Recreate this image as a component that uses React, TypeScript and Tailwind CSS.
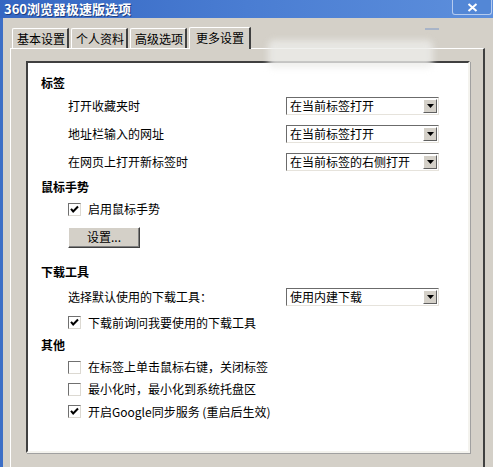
const font = "font-['SimSun','Noto_Sans_CJK_SC',sans-serif]";

function Check({ checked }: { checked: boolean }) {
  return (
    <span className="w-[13px] h-[13px] flex-shrink-0 bg-white border border-t-[#707070] border-l-[#707070] border-b-[#dcd9d2] border-r-[#dcd9d2] flex items-center justify-center">
      {checked && (
        <svg width="9" height="9" viewBox="0 0 9 9">
          <path d="M1 3.8 L3.2 6.5 L8 1.5" stroke="#000" strokeWidth="2" fill="none" />
        </svg>
      )}
    </span>
  );
}

function Select({ value }: { value: string }) {
  return (
    <div className="w-[153px] h-[18px] bg-white border border-t-[#6b6b6b] border-l-[#6b6b6b] border-b-[#e6e3dc] border-r-[#e6e3dc] flex items-center">
      <span className="flex-1 pl-[3px] text-[12px] leading-none text-black">{value}</span>
      <span className="w-[14px] h-[14px] mr-[1px] bg-[#d4d0c8] border border-t-white border-l-white border-b-[#606060] border-r-[#606060] flex items-center justify-center">
        <svg width="7" height="4" viewBox="0 0 7 4">
          <path d="M0 0 H7 L3.5 4 Z" fill="#000" />
        </svg>
      </span>
    </div>
  );
}

function Heading({ text, h, mt = 0 }: { text: string; h: number; mt?: number }) {
  return (
    <div className="flex items-center pl-[13px] font-bold text-[12px] leading-none text-black" style={{ height: h, marginTop: mt }}>
      {text}
    </div>
  );
}

function SelectRow({ label, value, h }: { label: string; value: string; h: number }) {
  return (
    <div className="flex items-center pl-[40px] text-[12px] leading-none text-black" style={{ height: h }}>
      <span className="w-[218px]">{label}</span>
      <Select value={value} />
    </div>
  );
}

function CheckRow({ label, checked, h }: { label: string; checked: boolean; h: number }) {
  return (
    <div className="flex items-center pl-[40px] gap-[7px] text-[12px] leading-none text-black" style={{ height: h }}>
      <Check checked={checked} />
      <span>{label}</span>
    </div>
  );
}

const tabs = ['基本设置', '个人资料', '高级选项'];

export default function App() {
  return (
    <div className={`relative w-[493px] h-[467px] overflow-hidden bg-[#d4d0c8] ${font}`}>
      {/* title bar */}
      <div className="h-[18px] bg-gradient-to-r from-[#3466c2] via-[#4a7dd2] to-[#5d8fdc] flex items-start justify-between">
        <span className="pl-[4px] pt-[2px] text-[13px] font-bold text-white leading-none [text-shadow:1px_1px_0_#1f3f80]">
          360浏览器极速版选项
        </span>
        <span className="w-[40px] h-[15px] mr-[1px] border border-[#b5cbef] border-t-0 rounded-b-[3px] bg-[#5387d6] flex items-center justify-center">
          <svg width="11" height="9" viewBox="0 0 11 9">
            <path d="M1.5 1 L9.5 8 M9.5 1 L1.5 8" stroke="#fff" strokeWidth="2" />
          </svg>
        </span>
      </div>

      <div className="flex h-[449px]">
        <div className="w-[3px] bg-[#3c6ec6]" />
        <div className="flex-1 pl-[7px] pt-[8px]">
          {/* tabs */}
          <div className="flex items-end h-[22px] pl-[2px] text-[12px] leading-none text-black">
            {tabs.map((t) => (
              <div
                key={t}
                className="h-[20px] pl-[4px] pr-[2px] mr-[2px] flex items-center border-l border-t border-l-white border-t-white border-r-[2px] border-r-[#404040] rounded-tl-[2px]"
              >
                {t}
              </div>
            ))}
            <div className="relative z-10 h-[22px] pl-[6px] pr-[5px] -mb-[1px] flex items-center pb-[1px] bg-[#d4d0c8] border-l border-t border-l-white border-t-white border-r-[2px] border-r-[#404040] rounded-tl-[2px]">
              更多设置
            </div>
          </div>

          {/* panel */}
          <div className="w-[475px] h-[430px] border-l border-t border-l-white border-t-white border-r-[2px] border-r-[#404040] pt-[12px] pl-[15px]">
            <div className="w-[444px] h-[392px] bg-white border-2 border-t-[#404040] border-l-[#404040] border-b-[#f4f3ee] border-r-[#f4f3ee] [box-shadow:1px_1px_0_#a0a0a0] pt-[10px]">
              <Heading text="标签" h={19} />
              <SelectRow label="打开收藏夹时" value="在当前标签打开" h={28} />
              <SelectRow label="地址栏输入的网址" value="在当前标签打开" h={28} />
              <SelectRow label="在网页上打开新标签时" value="在当前标签的右侧打开" h={28} />
              <Heading text="鼠标手势" h={22} />
              <CheckRow label="启用鼠标手势" checked h={22} />
              <div className="pl-[40px] mt-[3px]">
                <button className="w-[72px] h-[21px] bg-[#d4d0c8] border border-t-white border-l-white border-b-[#404040] border-r-[#404040] text-[12px] leading-none text-black [box-shadow:inset_-1px_-1px_0_#808080]">
                  设置...
                </button>
              </div>
              <Heading text="下载工具" h={18} mt={15} />
              <SelectRow label="选择默认使用的下载工具：" value="使用内建下载" h={32} />
              <CheckRow label="下载前询问我要使用的下载工具" checked h={20} />
              <Heading text="其他" h={24} />
              <CheckRow label="在标签上单击鼠标右键，关闭标签" checked={false} h={21} />
              <CheckRow label="最小化时，最小化到系统托盘区" checked={false} h={23} />
              <CheckRow label="开启Google同步服务 (重启后生效)" checked h={22} />
            </div>
          </div>
        </div>
      </div>

      {/* blurred watermark overlay */}
      <div className="absolute left-[268px] top-[40px] w-[165px] h-[28px] bg-[#ececea]/80 blur-[3px] rounded-[6px]" />
      <div className="absolute left-[425px] top-[28px] w-[14px] h-[2px] bg-[#a8b4c8] blur-[0.5px]" />
    </div>
  );
}
